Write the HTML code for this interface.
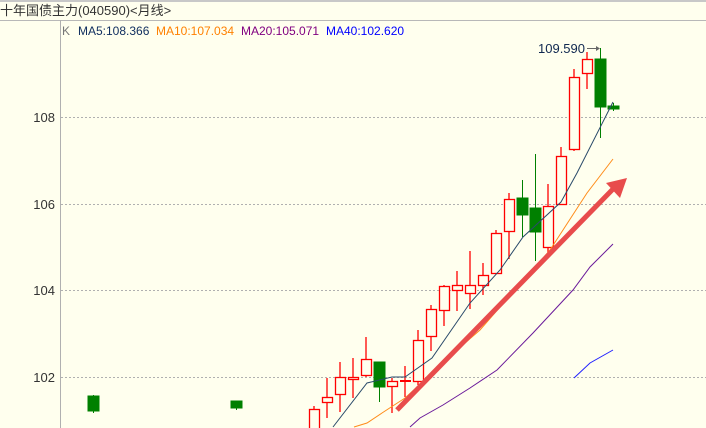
<!DOCTYPE html>
<html><head><meta charset="utf-8"><style>
html,body{margin:0;padding:0;width:706px;height:428px;overflow:hidden;background:#ffffee}
svg{display:block}
text{font-family:"Liberation Sans","Noto Sans CJK SC",sans-serif}
</style></head><body>
<svg width="706" height="428" viewBox="0 0 706 428" xmlns="http://www.w3.org/2000/svg">
<rect width="706" height="428" fill="#ffffee"/>
<rect width="706" height="2" fill="#c8c8c8"/>
<line x1="0" y1="20.5" x2="706" y2="20.5" stroke="#b8b8b8"/>
<line x1="60.5" y1="20" x2="60.5" y2="428" stroke="#b0b0b0"/>
<text x="0" y="15" font-size="13" fill="#333">十年国债主力(040590)&lt;月线&gt;</text>
<text x="62" y="35" font-size="12" fill="#777">K</text>
<text x="78" y="35" font-size="12" fill="#123060">MA5:108.366</text>
<text x="156" y="35" font-size="12" fill="#ff8000">MA10:107.034</text>
<text x="241" y="35" font-size="12" fill="#800080">MA20:105.071</text>
<text x="326" y="35" font-size="12" fill="#0000ff">MA40:102.620</text>
<g stroke="#b0b0b0" stroke-dasharray="2,2">
<line x1="61" y1="117.5" x2="706" y2="117.5"/><line x1="61" y1="204.5" x2="706" y2="204.5"/>
<line x1="61" y1="290.5" x2="706" y2="290.5"/><line x1="61" y1="377.5" x2="706" y2="377.5"/>
</g>
<g font-size="13" fill="#333" text-anchor="end">
<text x="55" y="122">108</text><text x="55" y="209">106</text><text x="55" y="295">104</text><text x="55" y="382">102</text>
</g>
<!-- red candles -->
<g stroke="#ff0000" stroke-width="1.3" fill="#ffffee">
<line x1="314" y1="406" x2="314" y2="428"/><rect x="309.5" y="409.5" width="10" height="20"/>
<line x1="327" y1="378" x2="327" y2="418"/><rect x="322.5" y="397.5" width="10" height="5"/>
<line x1="340" y1="362" x2="340" y2="412"/><rect x="335.5" y="377.5" width="10" height="17"/>
<line x1="353" y1="358" x2="353" y2="398"/><rect x="348.5" y="377.5" width="10" height="2"/>
<line x1="366" y1="337" x2="366" y2="377"/><rect x="361.5" y="359.5" width="10" height="16"/>
<line x1="392" y1="378" x2="392" y2="413"/><rect x="387.5" y="381.5" width="10" height="5"/>
<line x1="405" y1="366" x2="405" y2="397"/><line x1="400" y1="381" x2="411" y2="381" stroke-width="2"/>
<line x1="418" y1="330" x2="418" y2="385"/><rect x="413.5" y="340.5" width="10" height="41"/>
<line x1="431" y1="305" x2="431" y2="351"/><rect x="426.5" y="309.5" width="10" height="27"/>
<line x1="444" y1="285" x2="444" y2="326"/><rect x="439.5" y="286.5" width="10" height="24"/>
<line x1="457" y1="271" x2="457" y2="311"/><rect x="452.5" y="285.5" width="10" height="5"/>
<line x1="470" y1="251" x2="470" y2="309"/><rect x="465.5" y="285.5" width="10" height="8"/>
<line x1="483" y1="263" x2="483" y2="295"/><rect x="478.5" y="275.5" width="10" height="10"/>
<line x1="496" y1="230" x2="496" y2="273"/><rect x="491.5" y="233.5" width="10" height="40"/>
<line x1="509" y1="193" x2="509" y2="259"/><rect x="504.5" y="199.5" width="10" height="32"/>
<line x1="548" y1="184" x2="548" y2="253"/><rect x="543.5" y="206.5" width="10" height="41"/>
<line x1="561" y1="147" x2="561" y2="204"/><rect x="556.5" y="156.5" width="10" height="48"/>
<line x1="574" y1="69" x2="574" y2="151"/><rect x="569.5" y="77.5" width="10" height="72"/>
<line x1="587" y1="52" x2="587" y2="89"/><rect x="582.5" y="59.5" width="10" height="14"/>
</g>
<!-- green candles -->
<g fill="#008000" stroke="#008000">
<line x1="93.5" y1="395" x2="93.5" y2="413"/><rect x="88" y="396" width="11" height="15"/>
<rect x="231" y="401" width="11" height="7"/><line x1="236.5" y1="401" x2="236.5" y2="410"/>
<line x1="379.5" y1="362" x2="379.5" y2="402"/><rect x="374" y="362" width="11" height="25"/>
<line x1="522.5" y1="180" x2="522.5" y2="237"/><rect x="517" y="198" width="11" height="17"/>
<line x1="535.5" y1="154" x2="535.5" y2="261"/><rect x="530" y="208" width="11" height="24"/>
<line x1="600.5" y1="48" x2="600.5" y2="138"/><rect x="595" y="59" width="11" height="48"/>
<line x1="613.5" y1="103" x2="613.5" y2="111"/><rect x="608" y="106" width="11" height="3"/>
</g>
<!-- MAs -->
<polyline fill="none" stroke="#2a4a6a" stroke-width="1" points="333,427 367,383 392,377 405,377 432,358 470,303 500,270 523,237 561,202 577,173 613,102"/>
<polyline fill="none" stroke="#ff8c1a" stroke-width="1" points="354,427 367,423 382,413 405,398 427,378 457,350 480,330 500,307 530,273 550,250 563,230 587,193 613,159"/>
<polyline fill="none" stroke="#6a1a9a" stroke-width="1" points="410,427 420,418 443,405 470,388 497,370 533,333 573,290 590,267 613,244"/>
<polyline fill="none" stroke="#2020ff" stroke-width="1" points="574,378 590,363 613,350"/>
<!-- red arrow -->
<line x1="397" y1="410" x2="614" y2="188" stroke="#e84c4c" stroke-width="5"/>
<polygon points="627,178 606,183 620,198" fill="#e84c4c"/>
<!-- price label -->
<text x="538" y="53" font-size="13" fill="#102850" font-family="Liberation Mono">109.590</text>
<line x1="587" y1="48.5" x2="598" y2="48.5" stroke="#666"/>
<polygon points="600,48.5 596,46 596,51" fill="#666"/>
</svg>
</body></html>
